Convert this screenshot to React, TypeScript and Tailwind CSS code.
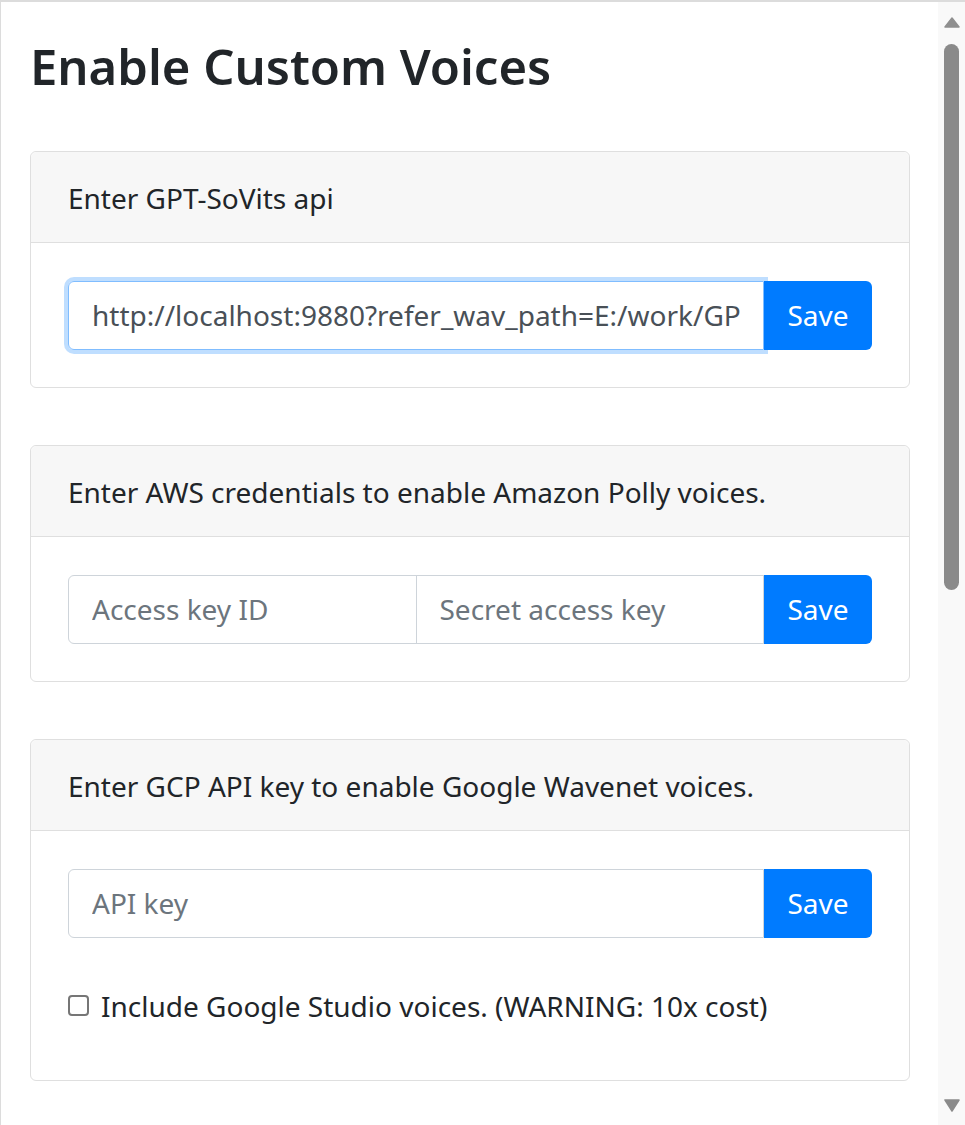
import { useState } from 'react'

const font = { fontFamily: '"Segoe UI", "Noto Sans", "Open Sans", sans-serif' }

function Card({ title, children }: { title: string; children: React.ReactNode }) {
  return (
    <div className="rounded-[6px] border border-[#dfdfdf] bg-white">
      <div className="flex h-[91px] items-center rounded-t-[6px] border-b border-[#dfdfdf] bg-[#f7f7f7] px-[37px] pt-[3px] text-[28px] text-[#212529]">
        {title}
      </div>
      <div className="px-[37px] pt-[38px] pb-[37px]">{children}</div>
    </div>
  )
}

function SaveButton() {
  return (
    <button className="relative z-10 h-[69px] w-[108px] shrink-0 rounded-r-[6px] bg-[#007bff] text-[28px] text-white">
      Save
    </button>
  )
}

export default function App() {
  const [api, setApi] = useState('http://localhost:9880?refer_wav_path=E:/work/GPT-SoVITS/ref.wav')
  const [studio, setStudio] = useState(false)

  return (
    <div className="flex h-[1125px] w-[965px] overflow-hidden border-t-2 border-l border-[#dcdcdc] bg-white" style={font}>
      <div className="min-w-0 flex-1 pl-[29px] pr-[28px] pt-[35px]">
        <h1 className="mb-[55px] text-[49px] font-semibold leading-[1.2] text-[#212529]">Enable Custom Voices</h1>

        <div className="flex flex-col gap-[57px]">
          <Card title="Enter GPT-SoVits api">
            <div className="flex">
              <input
                className="h-[69px] min-w-0 flex-1 rounded-l-[6px] border border-[#80bdff] px-[23px] text-[28px] text-[#495057] shadow-[0_0_0_4px_rgba(0,123,255,0.25)] outline-none"
                value={api}
                onChange={(e) => setApi(e.target.value)}
              />
              <SaveButton />
            </div>
          </Card>

          <Card title="Enter AWS credentials to enable Amazon Polly voices.">
            <div className="flex">
              <input
                className="h-[69px] min-w-0 flex-1 rounded-l-[6px] border border-[#ced4da] px-[23px] text-[28px] text-[#495057] outline-none placeholder:text-[#6c757d]"
                placeholder="Access key ID"
              />
              <input
                className="-ml-px h-[69px] min-w-0 flex-1 border border-[#ced4da] px-[23px] text-[28px] text-[#495057] outline-none placeholder:text-[#6c757d]"
                placeholder="Secret access key"
              />
              <SaveButton />
            </div>
          </Card>

          <Card title="Enter GCP API key to enable Google Wavenet voices.">
            <div className="flex">
              <input
                className="h-[69px] min-w-0 flex-1 rounded-l-[6px] border border-[#ced4da] px-[23px] text-[28px] text-[#495057] outline-none placeholder:text-[#6c757d]"
                placeholder="API key"
              />
              <SaveButton />
            </div>
            <label className="mt-[50px] mb-[19px] flex items-center text-[28px] leading-[36px] text-[#212529]">
              <input
                type="checkbox"
                checked={studio}
                onChange={(e) => setStudio(e.target.checked)}
                className="mr-[12px] h-[21px] w-[21px] shrink-0 appearance-none rounded-[4px] border-2 border-[#767676] bg-white checked:bg-[#007bff]"
              />
              Include Google Studio voices. (WARNING: 10x cost)
            </label>
          </Card>
        </div>
      </div>

      <div className="flex w-[27px] shrink-0 flex-col items-center bg-[#f9f9f9] pt-[15px] pb-[13px]">
        <svg width="16" height="11" viewBox="0 0 16 11" className="mb-[16px]">
          <path d="M8 1 L15 10 L1 10 Z" fill="#8f8f8f" stroke="#8f8f8f" strokeWidth="1.5" strokeLinejoin="round" />
        </svg>
        <div className="h-[546px] w-[15px] rounded-full bg-[#8a8a8a]" />
        <div className="flex-1" />
        <svg width="16" height="13" viewBox="0 0 16 13">
          <path d="M1 1 L15 1 L8 12 Z" fill="#8a8a8a" stroke="#8a8a8a" strokeWidth="1.5" strokeLinejoin="round" />
        </svg>
      </div>
    </div>
  )
}
